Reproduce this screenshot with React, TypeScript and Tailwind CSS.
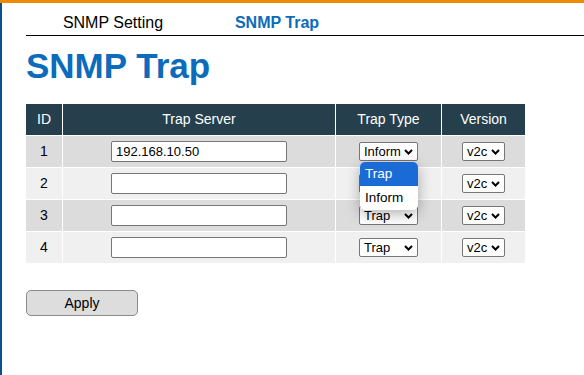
import { useState } from 'react';

type Row = { id: number; server: string; type: string; version: string };

const rows: Row[] = [
  { id: 1, server: '192.168.10.50', type: 'Inform', version: 'v2c' },
  { id: 2, server: '', type: 'Trap', version: 'v2c' },
  { id: 3, server: '', type: 'Trap', version: 'v2c' },
  { id: 4, server: '', type: 'Trap', version: 'v2c' },
];

function Chevron() {
  return (
    <svg width="9" height="6" viewBox="0 0 9 6" className="shrink-0">
      <path d="M1 1 L4.5 4.5 L8 1" fill="none" stroke="#000" strokeWidth="2" />
    </svg>
  );
}

function FakeSelect({ value, width }: { value: string; width: string }) {
  return (
    <div
      className={`${width} h-[19px] flex items-center justify-between pl-[4px] pr-[4px] bg-white border border-[#767676] rounded-[2px] text-[13px] text-black leading-none`}
    >
      <span>{value}</span>
      <Chevron />
    </div>
  );
}

export default function App() {
  const [open] = useState(true);

  return (
    <div className="min-h-[375px] bg-white border-t-[3px] border-[#ef8a06] font-['Liberation_Sans',Arial,sans-serif]">
      <div className="min-h-[372px] border-l-2 border-[#0b4f8a] pl-6">
        {/* Tabs */}
        <div className="flex h-[33px] border-b border-black">
          <div className="w-[174px] flex justify-center pt-[8px] text-[16px] text-black">SNMP Setting</div>
          <div className="w-[154px] flex flex-col">
            <div className="flex-1 flex justify-center pt-[8px] text-[16px] font-bold text-[#0c6cbb]">SNMP Trap</div>
            <div className="h-[4px] bg-[#ef8a06]" />
          </div>
        </div>

        <h1 className="mt-[10px] text-[35px] leading-[40px] font-bold text-[#0c6cbb]">SNMP Trap</h1>

        {/* Table */}
        <div className="relative mt-[18px] w-[499px]">
          <div className="grid grid-cols-[36px_272px_105px_83px] gap-px bg-white">
            {['ID', 'Trap Server', 'Trap Type', 'Version'].map((h) => (
              <div key={h} className="h-[31px] flex items-center justify-center bg-[#263f4d] text-white text-[14px]">
                {h}
              </div>
            ))}
            {rows.map((r, i) => {
              const bg = i % 2 === 0 ? 'bg-[#dcdcdc]' : 'bg-[#f0f0f0]';
              return [
                <div key={`id${r.id}`} className={`${bg} h-[31px] flex items-center justify-center text-[14px] text-black`}>
                  {r.id}
                </div>,
                <div key={`s${r.id}`} className={`${bg} h-[31px] flex items-center justify-center`}>
                  <input
                    readOnly
                    value={r.server}
                    className="w-[176px] h-[21px] px-[4px] bg-white border border-[#767676] rounded-[2px] text-[13px] text-black outline-none"
                  />
                </div>,
                <div key={`t${r.id}`} className={`${bg} h-[31px] flex items-center justify-center`}>
                  <FakeSelect value={r.type} width="w-[59px]" />
                </div>,
                <div key={`v${r.id}`} className={`${bg} h-[31px] flex items-center justify-center`}>
                  <FakeSelect value={r.version} width="w-[43px]" />
                </div>,
              ];
            })}
          </div>

          {/* Open dropdown for row 1 */}
          {open && (
            <div className="absolute left-[334px] top-[58px] w-[58px] bg-white rounded-[5px] overflow-hidden shadow-[0_4px_14px_rgba(0,0,0,0.3)] text-[13.5px]">
              <div className="h-[24px] flex items-center pl-[5px] bg-[#1a6bd6] text-white">Trap</div>
              <div className="h-[24px] flex items-center pl-[5px] text-black">Inform</div>
            </div>
          )}
        </div>

        <button className="mt-[27px] w-[112px] h-[26px] bg-[#dddddd] border border-[#8a8a8a] rounded-[5px] text-[14px] text-black">
          Apply
        </button>
      </div>
    </div>
  );
}
